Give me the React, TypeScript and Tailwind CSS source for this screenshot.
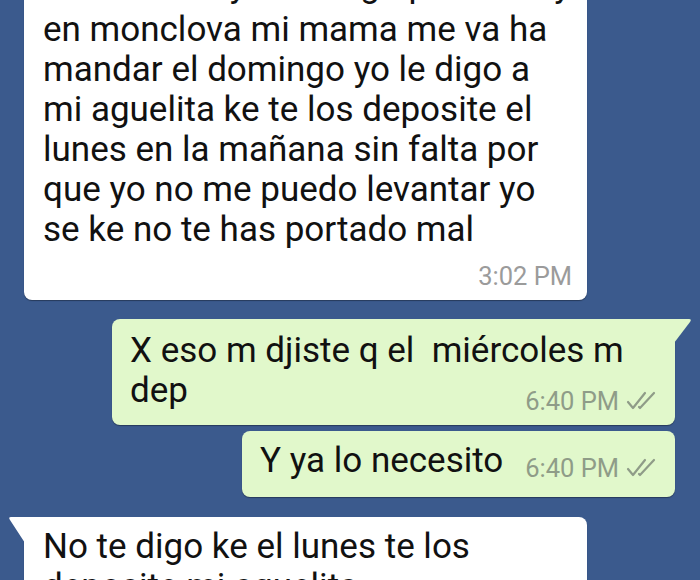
function Ticks() {
  return (
    <svg width="32" height="22" viewBox="0 0 32 22" fill="none" stroke="#8f9c88" strokeWidth="2.2" strokeLinecap="round" strokeLinejoin="round">
      <path d="M3 12 L8 18 L20 3" />
      <path d="M14 17 L15 18 L29 3" />
    </svg>
  );
}

export default function App() {
  return (
    <div className="h-[580px] w-[700px] overflow-hidden bg-[#3b5a8d] font-['Roboto',sans-serif] text-[#111111]">
      {/* incoming bubble, top cut */}
      <div className="-mt-[38px] ml-[24px] w-[563px] rounded-[8px] bg-white pl-[19px] pr-[15px] pt-0 pb-[9px] shadow-[0_1px_1px_rgba(0,0,0,0.35)]">
        <div className="whitespace-nowrap text-[35px] leading-[48px]">ke el dinero ya lo tengo pero estoy</div>
        <p className="whitespace-nowrap text-[35px] leading-[40px]">
          en monclova mi mama me va ha
          <br />
          mandar el domingo yo le digo a
          <br />
          mi aguelita ke te los deposite el
          <br />
          lunes en la mañana sin falta por
          <br />
          que yo no me puedo levantar yo
          <br />
          se ke no te has portado mal
        </p>
        <div className="mt-[11px] flex justify-end text-[25.5px] leading-[30px] text-[#9b9b9b]">3:02 PM</div>
      </div>

      {/* outgoing 1 */}
      <div className="relative mt-[19px] ml-[112px] w-[563px] rounded-[8px] rounded-tr-none bg-[#e1f8cb] pl-[18px] pr-[18px] pt-[12px] pb-[9px] shadow-[0_1px_1px_rgba(0,0,0,0.35)]">
        <svg className="absolute -right-[17px] top-0" width="18" height="24" viewBox="0 0 18 24">
          <path d="M0 0 L15 0 Q18 0 16 3 L0 24 Z" fill="#e1f8cb" />
        </svg>
        <p className="whitespace-nowrap text-[35px] leading-[40px]">
          X eso m djiste q el&nbsp; miércoles m
          <br />
          dep
        </p>
        <div className="-mt-[25px] flex items-center justify-end gap-[6px] text-[25.5px] leading-[30px] text-[#8f9c88]">
          <span>6:40 PM</span>
          <Ticks />
        </div>
      </div>

      {/* outgoing 2 */}
      <div className="mt-[6px] ml-[242px] flex w-[433px] items-start justify-between rounded-[8px] bg-[#e1f8cb] pl-[18px] pr-[18px] pt-[10px] pb-[14px] shadow-[0_1px_1px_rgba(0,0,0,0.35)]">
        <p className="whitespace-nowrap text-[35px] leading-[40px]">Y ya lo necesito</p>
        <div className="mt-[12px] flex items-center gap-[6px] text-[25.5px] leading-[30px] text-[#8f9c88]">
          <span>6:40 PM</span>
          <Ticks />
        </div>
      </div>

      {/* incoming 2 */}
      <div className="relative mt-[20px] ml-[24px] w-[563px] rounded-[8px] rounded-tl-none bg-white pl-[19px] pr-[15px] pt-[10px] pb-[9px] shadow-[0_1px_1px_rgba(0,0,0,0.35)]">
        <svg className="absolute -left-[16px] top-0" width="17" height="26" viewBox="0 0 17 26">
          <path d="M17 0 L3 0 Q0 0 2 3 L17 26 Z" fill="#ffffff" />
        </svg>
        <p className="whitespace-nowrap text-[35px] leading-[40px]">
          No te digo ke el lunes te los
          <br />
          deposite mi aguelita
        </p>
      </div>
    </div>
  );
}
